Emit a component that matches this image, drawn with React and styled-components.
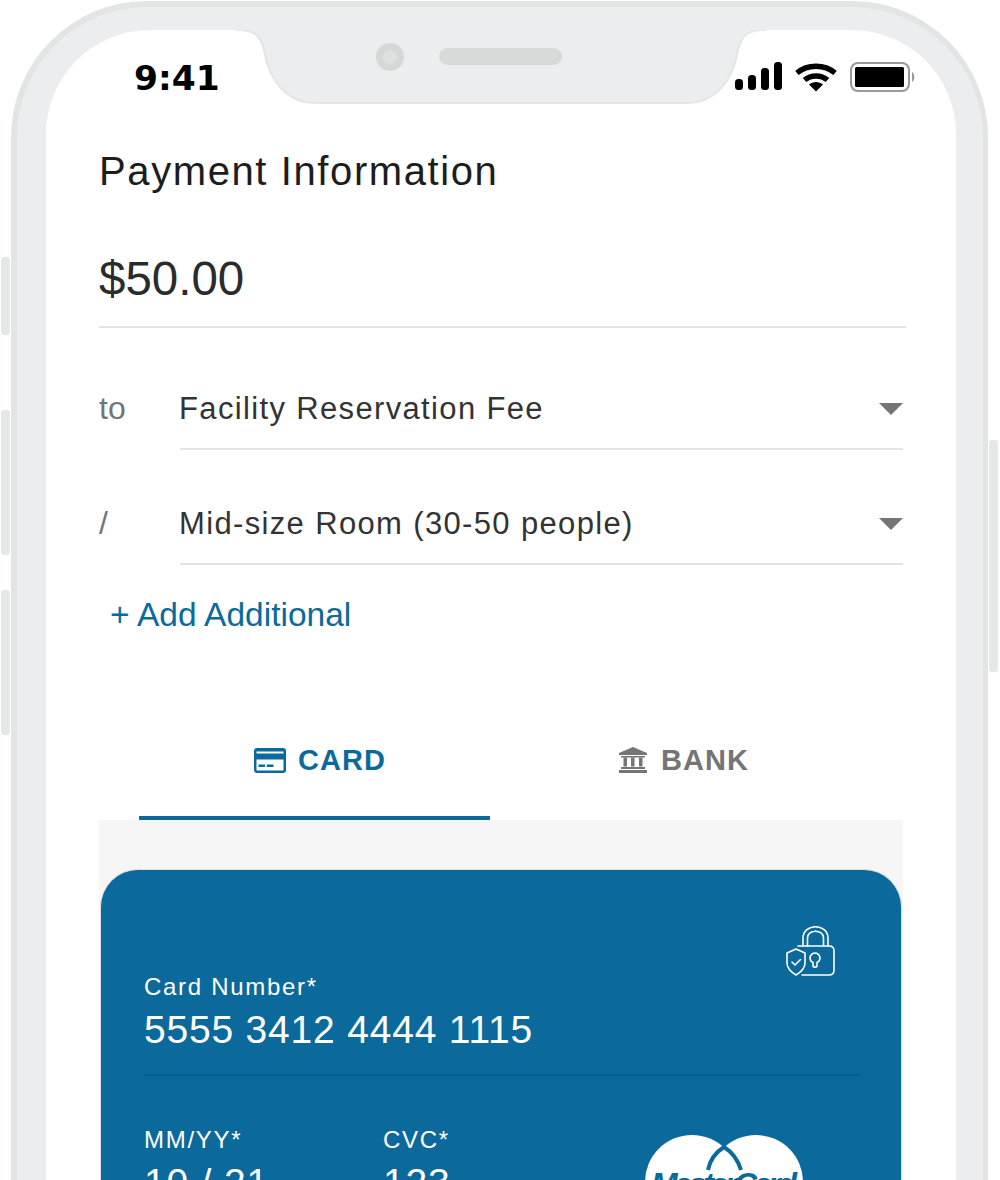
import styled, { createGlobalStyle } from "styled-components";

const BLUE = "#0b6a9b";

const GlobalStyle = createGlobalStyle`
  html, body {
    margin: 0;
    padding: 0;
    background: #fff;
  }
  * {
    box-sizing: border-box;
  }
`;

const Page = styled.div`
  width: 1000px;
  height: 1180px;
  overflow: hidden;
  padding: 1px 12px 0 11px;
  font-family: "Liberation Sans", Arial, sans-serif;
`;

const Phone = styled.div`
  position: relative;
  height: 1400px;
  background: #ecedee;
  border: solid #e3e4e4;
  border-width: 6px 5px 0 6px;
  border-radius: 136px 136px 0 0;
  padding: 23px 27px 0 29px;
`;

const SideButton = styled.div`
  position: absolute;
  top: ${(p) => p.$top}px;
  height: ${(p) => p.$height}px;
  width: 9px;
  background: #e6e7e7;
  border-radius: 3px;
  ${(p) => (p.$right ? "right: -15px;" : "left: -16px;")}
`;

const Screen = styled.div`
  height: 100%;
  background: #fff;
  border-radius: 104px 104px 0 0;
  padding: 0 53px;
`;

const StatusBar = styled.div`
  position: relative;
  height: 73px;
  display: flex;
  align-items: flex-start;
  justify-content: space-between;
  margin: 0 -53px;
  padding: 27px 40px 0 88px;
`;

const Time = styled.div`
  font-family: "DejaVu Sans", sans-serif;
  font-weight: 700;
  font-size: 34.5px;
  line-height: 42px;
  color: #000;
`;

const StatusIcons = styled.div`
  display: flex;
  align-items: flex-start;
  padding-top: 5px;
  gap: 13px;
`;

const Notch = styled.svg`
  position: absolute;
  left: 190px;
  top: 0;
`;

const Title = styled.h1`
  margin: 43px 0 0;
  font-weight: 400;
  font-size: 40px;
  line-height: 50px;
  letter-spacing: 1.6px;
  color: #1d1d1d;
`;

const Amount = styled.div`
  margin: 53px -3px 0 0;
  padding-bottom: 17px;
  border-bottom: 2px solid #e4e4e4;
  font-size: 47.5px;
  line-height: 60px;
  color: #2b2b2b;
`;

const SelectRow = styled.div`
  display: flex;
  align-items: center;
  margin-top: ${(p) => p.$top}px;
`;

const RowLabel = styled.div`
  width: 81px;
  padding-bottom: 4px;
  font-size: 32px;
  color: #757575;
`;

const SelectField = styled.div`
  flex: 1;
  height: 80px;
  display: flex;
  align-items: center;
  justify-content: space-between;
  border-bottom: 2px solid #e4e4e4;
  font-size: 31px;
  letter-spacing: 1.35px;
  color: #333;
`;

const SelectText = styled.span`
  margin-left: -1px;
`;

const Caret = styled.span`
  width: 0;
  height: 0;
  border-left: 12px solid transparent;
  border-right: 12px solid transparent;
  border-top: 12px solid #757575;
`;

const AddLink = styled.div`
  margin-top: 30px;
  padding-left: 11px;
  font-size: 33.5px;
  line-height: 40px;
  color: ${BLUE};
`;

const Tabs = styled.div`
  display: grid;
  grid-template-columns: 351px 388px;
  margin-top: 65px;
  padding-left: 40px;
`;

const Tab = styled.div`
  height: 120px;
  display: flex;
  align-items: center;
  justify-content: center;
  gap: ${(p) => (p.$active ? "12px" : "14px")};
  padding-top: 4px;
  padding-left: ${(p) => (p.$active ? "11px" : "0")};
  font-size: 29px;
  font-weight: 700;
  letter-spacing: 1.1px;
  color: ${(p) => (p.$active ? BLUE : "#757575")};
  border-bottom: 4px solid ${(p) => (p.$active ? BLUE : "transparent")};
`;

const Panel = styled.div`
  background: #f6f6f6;
  padding: 49px 1px 0;
`;

const Card = styled.div`
  height: 500px;
  background: ${BLUE};
  border: 1px solid #e0e0e0;
  border-bottom: 0;
  border-radius: 38px 38px 0 0;
  padding: 56px 41px 0 43px;
  color: #fff;
`;

const CardTop = styled.div`
  display: flex;
  justify-content: space-between;
  align-items: flex-start;
  height: 150px;
  border-bottom: 2px solid #0a5e8a;
`;

const CardField = styled.div`
  margin-top: ${(p) => p.$top || 0}px;
  width: ${(p) => p.$width || "auto"};
`;

const FieldLabel = styled.div`
  font-size: 24px;
  line-height: 30px;
  letter-spacing: 1.7px;
`;

const FieldValue = styled.div`
  margin-top: 6px;
  font-size: 39px;
  line-height: 44px;
  letter-spacing: 0.8px;
`;

const LockIcon = styled.svg`
  margin-right: 25px;
`;

const CardBottom = styled.div`
  position: relative;
  display: flex;
  padding-top: 49px;
`;

const Logo = styled.svg`
  position: absolute;
  left: 500px;
  top: 59px;
`;

function Signal() {
  return (
    <svg width="47" height="30" viewBox="0 0 47 30">
      <rect x="0" y="17" width="8" height="11" rx="3.5" fill="#000" />
      <rect x="13" y="13" width="8" height="15" rx="3.5" fill="#000" />
      <rect x="26" y="6" width="8" height="22" rx="3.5" fill="#000" />
      <rect x="39" y="0" width="8" height="28" rx="3.5" fill="#000" />
    </svg>
  );
}

function Wifi() {
  return (
    <svg width="42" height="30" viewBox="0 0 42 30" fill="none">
      <path d="M2 11C12.5 2 29.5 2 40 11" stroke="#000" strokeWidth="5.5" />
      <path d="M9.5 18C16 12.5 26 12.5 32.5 18" stroke="#000" strokeWidth="5.5" />
      <path d="M14 22.5C18 19 24 19 28 22.5L21 29.5Z" fill="#000" />
    </svg>
  );
}

function Battery() {
  return (
    <svg width="66" height="30" viewBox="0 0 66 30">
      <rect x="1" y="1" width="58" height="28" rx="7" fill="none" stroke="#999" strokeWidth="2" />
      <rect x="5" y="5" width="49" height="20" rx="1.5" fill="#000" />
      <path d="M62 10C65 11 65 19 62 20Z" fill="#999" />
    </svg>
  );
}

function CardIcon() {
  return (
    <svg width="32" height="25" viewBox="0 0 32 25">
      <rect x="0" y="0" width="32" height="25" rx="3" fill={BLUE} />
      <rect x="2.5" y="3.5" width="27" height="2" fill="#fff" />
      <rect x="2.5" y="11.5" width="27" height="11" fill="#fff" />
      <rect x="4.5" y="16.5" width="6.5" height="2.5" fill={BLUE} />
      <rect x="12.7" y="16.5" width="6.8" height="2.5" fill={BLUE} />
    </svg>
  );
}

function BankIcon() {
  return (
    <svg width="28" height="26" viewBox="0 0 28 26" fill="#757575">
      <path d="M14 0L28 6V8H0V6Z" />
      <rect x="2" y="9" width="24" height="1.5" />
      <rect x="4.5" y="10.5" width="3.5" height="9" />
      <rect x="12" y="10.5" width="3.5" height="9" />
      <rect x="20" y="10.5" width="3.5" height="9" />
      <rect x="2" y="20" width="24" height="2" />
      <rect x="0" y="23" width="28" height="3" />
    </svg>
  );
}

export default function App() {
  return (
    <Page>
      <GlobalStyle />
      <Phone>
        <SideButton $top={250} $height={78} />
        <SideButton $top={403} $height={145} />
        <SideButton $top={583} $height={145} />
        <SideButton $right $top={433} $height={232} />
        <Screen>
          <StatusBar>
            <Time>9:41</Time>
            <Notch width="530" height="75" viewBox="0 0 530 75">
              <path
                d="M0 0H4C18 0 25 6 28 20C33 50 50 73 80 73H450C480 73 497 50 502 20C505 6 512 0 526 0H530V-4H0Z"
                fill="#ecedee"
                stroke="#e4e5e5"
                strokeWidth="2"
              />
              <circle cx="154" cy="27" r="14" fill="#d6d7d7" />
              <circle cx="154" cy="27" r="7" fill="#dedfdf" />
              <rect x="203" y="18" width="123" height="17" rx="8.5" fill="#d8d9d9" />
            </Notch>
            <StatusIcons>
              <Signal />
              <Wifi />
              <Battery />
            </StatusIcons>
          </StatusBar>
          <Title>Payment Information</Title>
          <Amount>$50.00</Amount>
          <SelectRow $top={42}>
            <RowLabel>to</RowLabel>
            <SelectField>
              <SelectText>Facility Reservation Fee</SelectText>
              <Caret />
            </SelectField>
          </SelectRow>
          <SelectRow $top={35}>
            <RowLabel>/</RowLabel>
            <SelectField>
              <SelectText>Mid-size Room (30-50 people)</SelectText>
              <Caret />
            </SelectField>
          </SelectRow>
          <AddLink>+ Add Additional</AddLink>
          <Tabs>
            <Tab $active>
              <CardIcon />
              CARD
            </Tab>
            <Tab>
              <BankIcon />
              BANK
            </Tab>
          </Tabs>
          <Panel>
            <Card>
              <CardTop>
                <CardField $top={46}>
                  <FieldLabel>Card Number*</FieldLabel>
                  <FieldValue>5555 3412 4444 1115</FieldValue>
                </CardField>
                <LockIcon width="50" height="50" viewBox="0 0 50 50" fill="none" stroke="#fff" strokeWidth="1.6" strokeLinecap="round" strokeLinejoin="round">
                  <path d="M18 20V12C18 -3 43 -3 43 12V20" />
                  <path d="M22.500 20V12C22.500 3 38.500 3 38.500 12V20" />
                  <path d="M13 20H44C47.500 20 49 22 49 25V44C49 47.500 47.500 49 44 49H17" />
                  <path d="M28 36.600A5 5 0 1 1 32 36.600V40C32 41.500 28 41.500 28 40Z" />
                  <path d="M11 23L20 27V37C20 42 16 46 11 49C6 46 2 42 2 37V27Z" />
                  <path d="M7 36L10 39L15.500 33.500" />
                </LockIcon>
              </CardTop>
              <CardBottom>
                <CardField $width="239px">
                  <FieldLabel>MM/YY*</FieldLabel>
                  <FieldValue>10 / 21</FieldValue>
                </CardField>
                <CardField>
                  <FieldLabel>CVC*</FieldLabel>
                  <FieldValue>123</FieldValue>
                </CardField>
                <Logo width="160" height="96" viewBox="0 0 160 96">
                  <circle cx="48" cy="47" r="47" fill="#fff" />
                  <circle cx="112" cy="47" r="47" fill="#fff" />
                  <path d="M80 12C72 17 66 25 64 35M80 12C88 17 94 25 97 35" fill="none" stroke={BLUE} strokeWidth="4" />
                  <text x="80" y="60" textAnchor="middle" fontFamily="Liberation Sans" fontStyle="italic" fontWeight="700" fontSize="32" textLength="146" fill={BLUE}>MasterCard</text>
                </Logo>
              </CardBottom>
            </Card>
          </Panel>
        </Screen>
      </Phone>
    </Page>
  );
}
